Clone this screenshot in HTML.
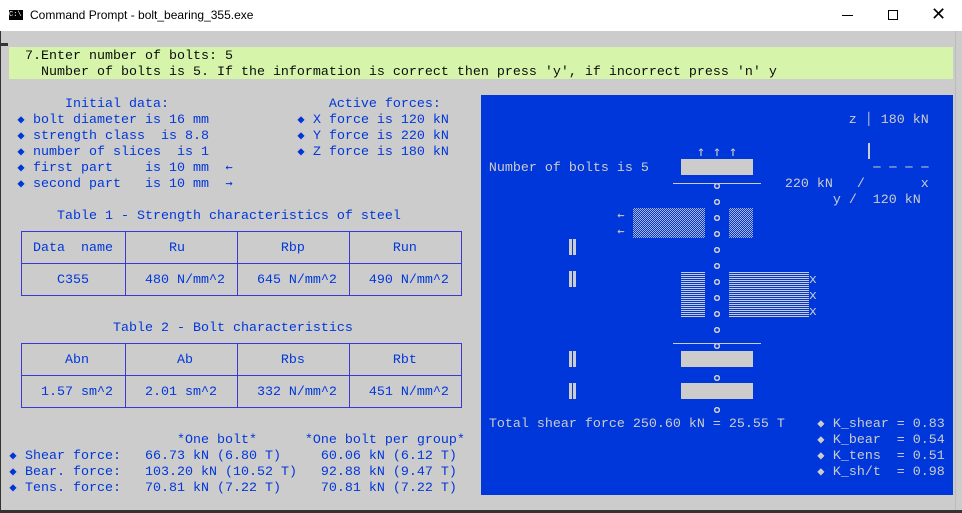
<!DOCTYPE html>
<html><head><meta charset="utf-8"><style>
*{margin:0;padding:0;box-sizing:border-box}
body{width:962px;height:513px;background:#ccc;position:relative;overflow:hidden;font-family:"Liberation Mono","DejaVu Sans Mono",monospace}
.tb{position:absolute;left:0;top:0;width:962px;height:31px;background:#fff;font-family:"Liberation Sans",sans-serif;font-size:12px;color:#000}
pre{position:absolute;left:1px;font-family:"Liberation Mono","DejaVu Sans Mono",monospace;font-size:13.33px;line-height:16px;white-space:pre}
.g{display:inline-block;width:8px;height:16px;line-height:16px;vertical-align:top;text-align:center;overflow:visible;font-family:"DejaVu Sans Mono",monospace;font-size:12px;position:relative;top:-2px}
.u{font-size:14px;top:-1px}
.o{display:inline-block;width:8px;height:16px;vertical-align:top;background:radial-gradient(circle at 4px 9px,transparent 1.6px,#ccc 1.7px,#ccc 3px,transparent 3.2px)}
.a{position:absolute}
.tl{position:absolute;background:#3a3ad2}
.dot{background:conic-gradient(#ccc 0 25%,#0037da 0 50%,#ccc 0 75%,#0037da 0) 0 0/2px 2px;opacity:.85}
.lin{background:repeating-linear-gradient(#ccc 0 1px,#0037da 1px 2px)}
</style></head><body>
<div class="tb">
<div class="a" style="left:9px;top:10px;width:14px;height:10px;background:#000;color:#fff;font-size:7px;line-height:10px;font-family:'Liberation Mono',monospace">C:\</div>
<div class="a" style="left:30px;top:8px">Command Prompt - bolt_bearing_355.exe</div>
<div class="a" style="left:842px;top:15px;width:11px;height:1px;background:#000"></div>
<div class="a" style="left:888px;top:10px;width:10px;height:10px;border:1px solid #000"></div>
<div class="a" style="left:931px;top:4px;font-size:18px;line-height:20px">✕</div>
</div>
<div class="a" style="left:0;top:31px;width:1px;height:482px;background:#333"></div>
<div class="a" style="left:0;top:43px;width:8px;height:3px;background:#333"></div>
<div class="a" style="left:955px;top:31px;width:7px;height:482px;background:#ccc;border-left:1px solid #bbb"></div>
<div class="a" style="left:0;top:510px;width:962px;height:3px;background:#333"></div>

<div class="a" style="left:9px;top:47px;width:944px;height:32px;background:#d6f5aa"></div>
<pre style="top:49px;color:#0c0c0c">   7.Enter number of bolts: 5
     Number of bolts is 5. If the information is correct then press 'y', if incorrect press 'n' y</pre>

<pre style="top:97px;color:#0037da">        Initial data:                    Active forces:
  <span class="g">◆</span> bolt diameter is 16 mm           <span class="g">◆</span> X force is 120 kN
  <span class="g">◆</span> strength class  is 8.8           <span class="g">◆</span> Y force is 220 kN
  <span class="g">◆</span> number of slices  is 1           <span class="g">◆</span> Z force is 180 kN
  <span class="g">◆</span> first part    is 10 mm  <span class="g">←</span>
  <span class="g">◆</span> second part   is 10 mm  <span class="g">→</span>

       Table 1 - Strength characteristics of steel

    Data  name       Ru            Rbp           Run

       C355       480 N/mm^2    645 N/mm^2    490 N/mm^2


              Table 2 - Bolt characteristics

        Abn           Ab           Rbs           Rbt

     1.57 sm^2    2.01 sm^2     332 N/mm^2    451 N/mm^2


                      *One bolt*      *One bolt per group*
 <span class="g">◆</span> Shear force:   66.73 kN (6.80 T)     60.06 kN (6.12 T)
 <span class="g">◆</span> Bear. force:   103.20 kN (10.52 T)   92.88 kN (9.47 T)
 <span class="g">◆</span> Tens. force:   70.81 kN (7.22 T)     70.81 kN (7.22 T)</pre>

<!-- table 1 -->
<div class="tl" style="left:21px;top:231px;width:441px;height:1px"></div>
<div class="tl" style="left:21px;top:263px;width:441px;height:1px"></div>
<div class="tl" style="left:21px;top:295px;width:441px;height:1px"></div>
<div class="tl" style="left:21px;top:231px;width:1px;height:65px"></div>
<div class="tl" style="left:125px;top:231px;width:1px;height:65px"></div>
<div class="tl" style="left:237px;top:231px;width:1px;height:65px"></div>
<div class="tl" style="left:349px;top:231px;width:1px;height:65px"></div>
<div class="tl" style="left:461px;top:231px;width:1px;height:65px"></div>
<!-- table 2 -->
<div class="tl" style="left:21px;top:343px;width:441px;height:1px"></div>
<div class="tl" style="left:21px;top:375px;width:441px;height:1px"></div>
<div class="tl" style="left:21px;top:407px;width:441px;height:1px"></div>
<div class="tl" style="left:21px;top:343px;width:1px;height:65px"></div>
<div class="tl" style="left:125px;top:343px;width:1px;height:65px"></div>
<div class="tl" style="left:237px;top:343px;width:1px;height:65px"></div>
<div class="tl" style="left:349px;top:343px;width:1px;height:65px"></div>
<div class="tl" style="left:461px;top:343px;width:1px;height:65px"></div>

<!-- blue panel -->
<div class="a" style="left:481px;top:95px;width:472px;height:400px;background:#0037da"></div>
<div class="a" style="left:681px;top:159px;width:72px;height:16px;background:#ccc"></div>
<div class="a" style="left:681px;top:351px;width:72px;height:16px;background:#ccc"></div>
<div class="a" style="left:681px;top:383px;width:72px;height:16px;background:#ccc"></div>
<div class="a" style="left:673px;top:183px;width:88px;height:1px;background:#ccc"></div>
<div class="a" style="left:673px;top:343px;width:88px;height:1px;background:#ccc"></div>
<div class="a" style="left:633px;top:208px;width:72px;height:30px;background:#0037da"><div class="dot" style="width:100%;height:100%"></div></div>
<div class="a" style="left:729px;top:208px;width:24px;height:30px;background:#0037da"><div class="dot" style="width:100%;height:100%"></div></div>
<div class="a lin" style="left:681px;top:272px;width:24px;height:46px"></div>
<div class="a lin" style="left:729px;top:272px;width:80px;height:46px"></div>
<div class="a" style="left:569px;top:239px;width:3px;height:16px;background:#ccc"></div>
<div class="a" style="left:573px;top:239px;width:3px;height:16px;background:#ccc"></div>
<div class="a" style="left:569px;top:271px;width:3px;height:16px;background:#ccc"></div>
<div class="a" style="left:573px;top:271px;width:3px;height:16px;background:#ccc"></div>
<div class="a" style="left:569px;top:351px;width:3px;height:16px;background:#ccc"></div>
<div class="a" style="left:573px;top:351px;width:3px;height:16px;background:#ccc"></div>
<div class="a" style="left:569px;top:383px;width:3px;height:16px;background:#ccc"></div>
<div class="a" style="left:573px;top:383px;width:3px;height:16px;background:#ccc"></div>
<div class="a" style="left:868px;top:143px;width:2px;height:16px;background:#ccc"></div>

<pre style="top:113px;color:#ccc">                                                                                                          z <span class="g">│</span> 180 kN

                                                                                       <span class="g u">↑</span> <span class="g u">↑</span> <span class="g u">↑</span>
                                                             Number of bolts is 5                            <span class="g">─</span> <span class="g">─</span> <span class="g">─</span> <span class="g">─</span>
                                                                                         <span class="o"></span>        220 kN   /       x
                                                                                         <span class="o"></span>              y /  120 kN
                                                                             <span class="g">←</span>           <span class="o"></span>
                                                                             <span class="g">←</span>           <span class="o"></span>
                                                                                         <span class="o"></span>
                                                                                         <span class="o"></span>
                                                                                         <span class="o"></span>           x
                                                                                         <span class="o"></span>           x
                                                                                         <span class="o"></span>           x
                                                                                         <span class="o"></span>
                                                                                         <span class="o"></span>

                                                                                         <span class="o"></span>

                                                                                         <span class="o"></span>
                                                             Total shear force 250.60 kN = 25.55 T    <span class="g">◆</span> K_shear = 0.83
                                                                                                      <span class="g">◆</span> K_bear  = 0.54
                                                                                                      <span class="g">◆</span> K_tens  = 0.51
                                                                                                      <span class="g">◆</span> K_sh/t  = 0.98</pre>
</body></html>
